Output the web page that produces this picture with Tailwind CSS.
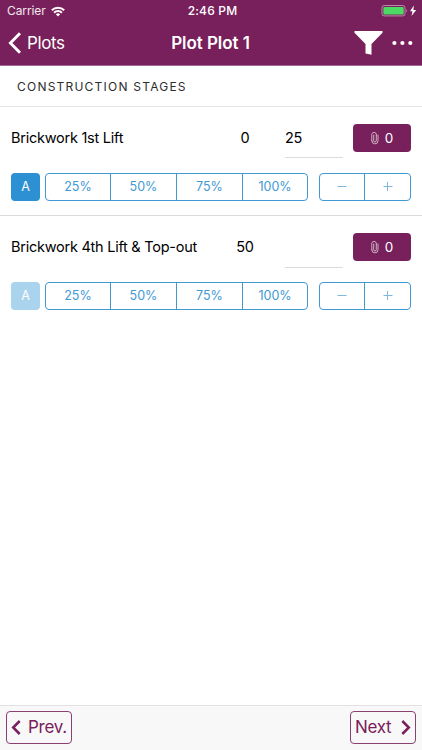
<!DOCTYPE html>
<html lang="en">
<head>
<meta charset="utf-8">
<title>Plot Plot 1</title>
<script src="https://cdn.jsdelivr.net/npm/@tailwindcss/browser@4"></script>
</head>
<body class="w-[422px] h-[750px] overflow-hidden bg-white font-['Inter','Liberation_Sans',sans-serif] text-black flex flex-col">
<svg class="hidden">
  <symbol id="clip" viewBox="0 0 8 14"><path d="M5.3 4v5.7a1.3 1.3 0 0 1-2.6 0V4M.8 9.8V3.2a2.3 2.3 0 0 1 4.5 0V4M.8 9.8a3.1 3.1 0 0 0 6.2 0V4" fill="none" stroke="currentColor" stroke-width=".8" stroke-linecap="round"/></symbol>
</svg>
<header class="h-[66px] shrink-0 bg-[#78205b] border-b border-[#a3688f] text-white flex flex-col">
  <div class="h-[22px] grid grid-cols-3 items-center pl-[7px] pr-[5px]">
    <div class="flex items-center gap-[5px] text-[12px] leading-[22px] tracking-[-0.1px] text-white/90">Carrier
      <svg class="w-[14px] h-[11px]" viewBox="0 0 14 11" fill="none" stroke="white" stroke-width="2"><path d="M.8 4.2a9 9 0 0 1 12.4 0M3.1 6.7a5.6 5.6 0 0 1 7.8 0"/><path d="M7 10.5 4.9 8.4a3 3 0 0 1 4.2 0z" fill="white" stroke="none"/></svg>
    </div>
    <div class="text-center text-[12px] leading-[22px] font-medium tracking-[0.2px] pl-[1px]">2:46 PM</div>
    <div class="flex justify-end items-center">
      <svg class="w-[42px] h-[12px]" viewBox="0 0 42 12"><rect x="7" y=".5" width="23" height="10.4" rx="2.2" fill="none" stroke="#b98aac"/><rect x="8.4" y="1.9" width="20.3" height="7.7" rx="1" fill="#4cd964"/><path d="M31.4 4q1.8 1.7 0 3.5z" fill="#b98aac"/><path d="M38.8.5 35 6.2h2.5L36.5 10.9 41.2 5.1h-2.8z" fill="white"/></svg>
    </div>
  </div>
  <div class="h-[41px] grid grid-cols-[1fr_auto_1fr] items-center pl-[8px] pr-[9px]">
    <div class="flex items-center gap-[6px] text-[17px] leading-[22px] tracking-[-0.4px]">
      <svg class="w-[13px] h-[22px]" viewBox="0 0 13 22"><path d="M12 1.2 2.4 11 12 20.8" fill="none" stroke="white" stroke-width="2.9"/></svg>Plots
    </div>
    <div class="text-[17px] leading-[22px] font-semibold tracking-[-0.05px]">Plot Plot 1</div>
    <div class="flex justify-end items-center gap-[9px]">
      <svg class="w-[29px] h-[24px]" viewBox="0 0 29 24"><path d="M.5 0h28v1.8L17.5 13v10.8L11.5 22.4V13L.5 1.8z" fill="white"/></svg>
      <svg class="w-[21px] h-[6px]" viewBox="0 0 21 6" fill="white"><circle cx="2.4" cy="3" r="2.1"/><circle cx="10.4" cy="3" r="2.1"/><circle cx="18.3" cy="3" r="2.1"/></svg>
    </div>
  </div>
</header>
<main class="flex-1">
  <h2 class="h-[41px] border-b border-[#e4e4e4] pl-[17px] text-[12px] leading-[41px] tracking-[1.22px] text-[#2c2c2c]">CONSTRUCTION STAGES</h2>
  <section class="h-[109px] border-b border-[#dadada] pl-[11px] pr-[11px]">
    <div class="h-[66px] pt-[17px] grid grid-cols-[216px_36px_22px_58px_10px_58px] items-start text-[14.5px] leading-[28px]">
      <div class="tracking-[-0.25px] whitespace-nowrap">Brickwork 1st Lift</div>
      <div class="text-center">0</div><div></div>
      <div class="h-[34px] border-b border-[#dcdcdc] tracking-[-0.3px]">25</div><div></div>
      <button class="h-[28px] rounded-[4px] bg-[#78205b] text-white text-[13.5px] flex items-center justify-center gap-[6px]"><svg class="w-[8px] h-[14px] opacity-80"><use href="#clip"/></svg>0</button>
    </div>
    <div class="h-[28px] flex text-[12.5px] leading-[26px] text-[#4199d3]">
      <button class="w-[29px] rounded-[4px] bg-[#2c90d3] text-white mr-[5px]">A</button>
      <div class="w-[264px] mr-[10px] grid grid-cols-[65px_66px_66px_1fr] border border-[#4199d3] rounded-[4px] text-center divide-x divide-[#4199d3]"><span>25%</span><span>50%</span><span>75%</span><span>100%</span></div>
      <div class="w-[92px] ml-px grid grid-cols-[45px_1fr] border border-[#4199d3] rounded-[4px] divide-x divide-[#4199d3]">
        <span class="flex items-center justify-center"><svg class="w-[10px] h-[10px]" viewBox="0 0 10 10"><path d="M.5 4.5h9" stroke="#7cb8e0"/></svg></span>
        <span class="flex items-center justify-center"><svg class="w-[10px] h-[10px]" viewBox="0 0 10 10"><path d="M.5 4.5h9M4.5 0v9" stroke="#7cb8e0"/></svg></span>
      </div>
    </div>
  </section>
  <section class="h-[109px] pl-[11px] pr-[11px]">
    <div class="h-[66px] pt-[17px] grid grid-cols-[216px_36px_22px_58px_10px_58px] items-start text-[14.5px] leading-[28px]">
      <div class="tracking-[-0.25px] whitespace-nowrap">Brickwork 4th Lift &amp; Top-out</div>
      <div class="text-center tracking-[-0.3px]">50</div><div></div>
      <div class="h-[35px] border-b border-[#dcdcdc]"></div><div></div>
      <button class="h-[28px] rounded-[4px] bg-[#78205b] text-white text-[13.5px] flex items-center justify-center gap-[6px]"><svg class="w-[8px] h-[14px] opacity-80"><use href="#clip"/></svg>0</button>
    </div>
    <div class="h-[28px] flex text-[12.5px] leading-[26px] text-[#4199d3]">
      <button class="w-[29px] rounded-[4px] bg-[#aad3ee] text-white mr-[5px]">A</button>
      <div class="w-[264px] mr-[10px] grid grid-cols-[65px_66px_66px_1fr] border border-[#4199d3] rounded-[4px] text-center divide-x divide-[#4199d3]"><span>25%</span><span>50%</span><span>75%</span><span>100%</span></div>
      <div class="w-[92px] ml-px grid grid-cols-[45px_1fr] border border-[#4199d3] rounded-[4px] divide-x divide-[#4199d3]">
        <span class="flex items-center justify-center"><svg class="w-[10px] h-[10px]" viewBox="0 0 10 10"><path d="M.5 4.5h9" stroke="#7cb8e0"/></svg></span>
        <span class="flex items-center justify-center"><svg class="w-[10px] h-[10px]" viewBox="0 0 10 10"><path d="M.5 4.5h9M4.5 0v9" stroke="#7cb8e0"/></svg></span>
      </div>
    </div>
  </section>
</main>
<footer class="h-[45px] shrink-0 bg-[#f8f8f8] border-t border-[#e2e2e2] flex justify-between items-start pt-[5px] pl-[6px] pr-[6px] text-[17px] text-[#78205b] tracking-[-0.3px]">
  <button class="w-[66px] h-[33px] border border-[#8b416f] rounded-[4px] flex items-center pl-[4px] gap-[7px]"><svg class="w-[10px] h-[15px] shrink-0" viewBox="0 0 10 15"><path d="M8.7 1 2.2 7.5 8.7 14" fill="none" stroke="currentColor" stroke-width="2.5"/></svg>Prev.</button>
  <button class="w-[66px] h-[33px] border border-[#8b416f] rounded-[4px] flex items-center justify-between pl-[4px] pr-[4px]">Next<svg class="w-[10px] h-[15px] shrink-0" viewBox="0 0 10 15"><path d="M1.3 1 7.8 7.5 1.3 14" fill="none" stroke="currentColor" stroke-width="2.5"/></svg></button>
</footer>
</body>
</html>
